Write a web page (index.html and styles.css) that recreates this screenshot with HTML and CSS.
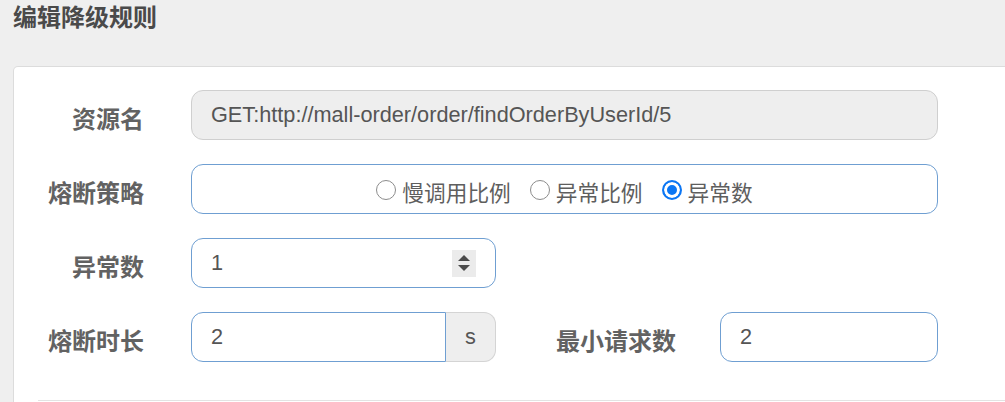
FILE: index.html
```html
<!DOCTYPE html>
<html lang="zh-CN">
<head>
<meta charset="utf-8">
<title>编辑降级规则</title>
<link rel="stylesheet" href="styles.css">
</head>
<body>
<h1 class="title">编辑降级规则</h1>
<div class="card">
  <form class="form">
    <div class="row">
      <label class="label">资源名</label>
      <div class="input input-disabled input-wide">GET:http://mall-order/order/findOrderByUserId/5</div>
    </div>
    <div class="row">
      <label class="label">熔断策略</label>
      <div class="input input-wide radios">
        <span class="radio"><span class="dot"></span><span class="rtext">慢调用比例</span></span>
        <span class="radio"><span class="dot"></span><span class="rtext">异常比例</span></span>
        <span class="radio"><span class="dot dot-on"></span><span class="rtext">异常数</span></span>
      </div>
    </div>
    <div class="row">
      <label class="label">异常数</label>
      <div class="input input-num">
        <span class="val">1</span>
        <span class="spin">
          <svg width="14" height="20" viewBox="0 0 14 20"><path d="M7 2 L13 8 L1 8 Z" fill="#4a4a4a"/><path d="M1 12 L13 12 L7 18 Z" fill="#4a4a4a"/></svg>
        </span>
      </div>
    </div>
    <div class="row">
      <label class="label">熔断时长</label>
      <div class="group">
        <div class="input input-left">2</div>
        <div class="addon">s</div>
      </div>
      <label class="label label2">最小请求数</label>
      <div class="input input-min">2</div>
    </div>
  </form>
  <div class="sep"></div>
</div>
</body>
</html>
```
FILE: styles.css
```css
html, body {
  margin: 0;
  padding: 0;
  background: #efefef;
  overflow: hidden;
  font-family: "Liberation Sans", "Noto Sans CJK SC", sans-serif;
}

.title {
  margin: 0;
  padding-left: 13px;
  font-family: "Noto Sans CJK SC", sans-serif;
  font-size: 24px;
  font-weight: 700;
  line-height: 32px;
  color: #4a4a4a;
}

.card {
  margin: 34px -20px 0 13px;
  background: #fff;
  border: 1px solid #dcdcdc;
  border-bottom: none;
  border-radius: 5px 5px 0 0;
  height: 336px;
}

.form {
  padding-top: 23px;
  display: flex;
  flex-direction: column;
  gap: 24px;
}

.row {
  display: flex;
  align-items: center;
  height: 50px;
}

.label {
  width: 130px;
  margin-right: 47px;
  box-sizing: border-box;
  padding-top: 5px;
  text-align: right;
  font-family: "Noto Sans CJK SC", sans-serif;
  font-size: 24px;
  font-weight: 700;
  color: #626262;
  line-height: 30px;
}

.label2 {
  width: 180px;
  margin-right: 44px;
}

.input {
  box-sizing: border-box;
  height: 50px;
  border: 1px solid #6f9fd2;
  border-radius: 12px;
  background: #fff;
  padding: 0 19px;
  display: flex;
  align-items: center;
  font-size: 21.7px;
  color: #555;
  white-space: nowrap;
}

.input-wide {
  width: 747px;
}

.input-disabled {
  background: #eeeeee;
  border-color: #cfcfcf;
}

.radios {
  justify-content: center;
  padding-top: 5px;
  gap: 19px;
}

.radio {
  display: inline-flex;
  align-items: center;
  gap: 6px;
}

.dot {
  box-sizing: border-box;
  width: 20px;
  height: 20px;
  border-radius: 50%;
  border: 1px solid #8c8c8c;
  background: #fff;
  margin-top: -3px;
}

.dot-on {
  border: 2px solid #0b76f4;
  background: #0b76f4;
  box-shadow: inset 0 0 0 3px #fff;
}

.rtext {
  font-family: "Noto Sans CJK SC", sans-serif;
  font-size: 21.7px;
  color: #5e5e5e;
  line-height: 30px;
}

.input-num {
  width: 305px;
  justify-content: space-between;
}

.spin {
  width: 24px;
  height: 27px;
  background: #ebebeb;
  display: flex;
  align-items: center;
  justify-content: center;
}

.group {
  display: flex;
  width: 305px;
  height: 50px;
}

.input-left {
  width: 255px;
  border-radius: 12px 0 0 12px;
}

.addon {
  box-sizing: border-box;
  width: 50px;
  height: 50px;
  background: #eeeeee;
  border: 1px solid #d4d4d4;
  border-left: none;
  border-radius: 0 12px 12px 0;
  display: flex;
  align-items: center;
  justify-content: center;
  font-size: 21.7px;
  color: #555;
}

.input-min {
  width: 218px;
}

.sep {
  margin: 38px 0 0 24px;
  border-top: 1px solid #e3e3e3;
}
```
